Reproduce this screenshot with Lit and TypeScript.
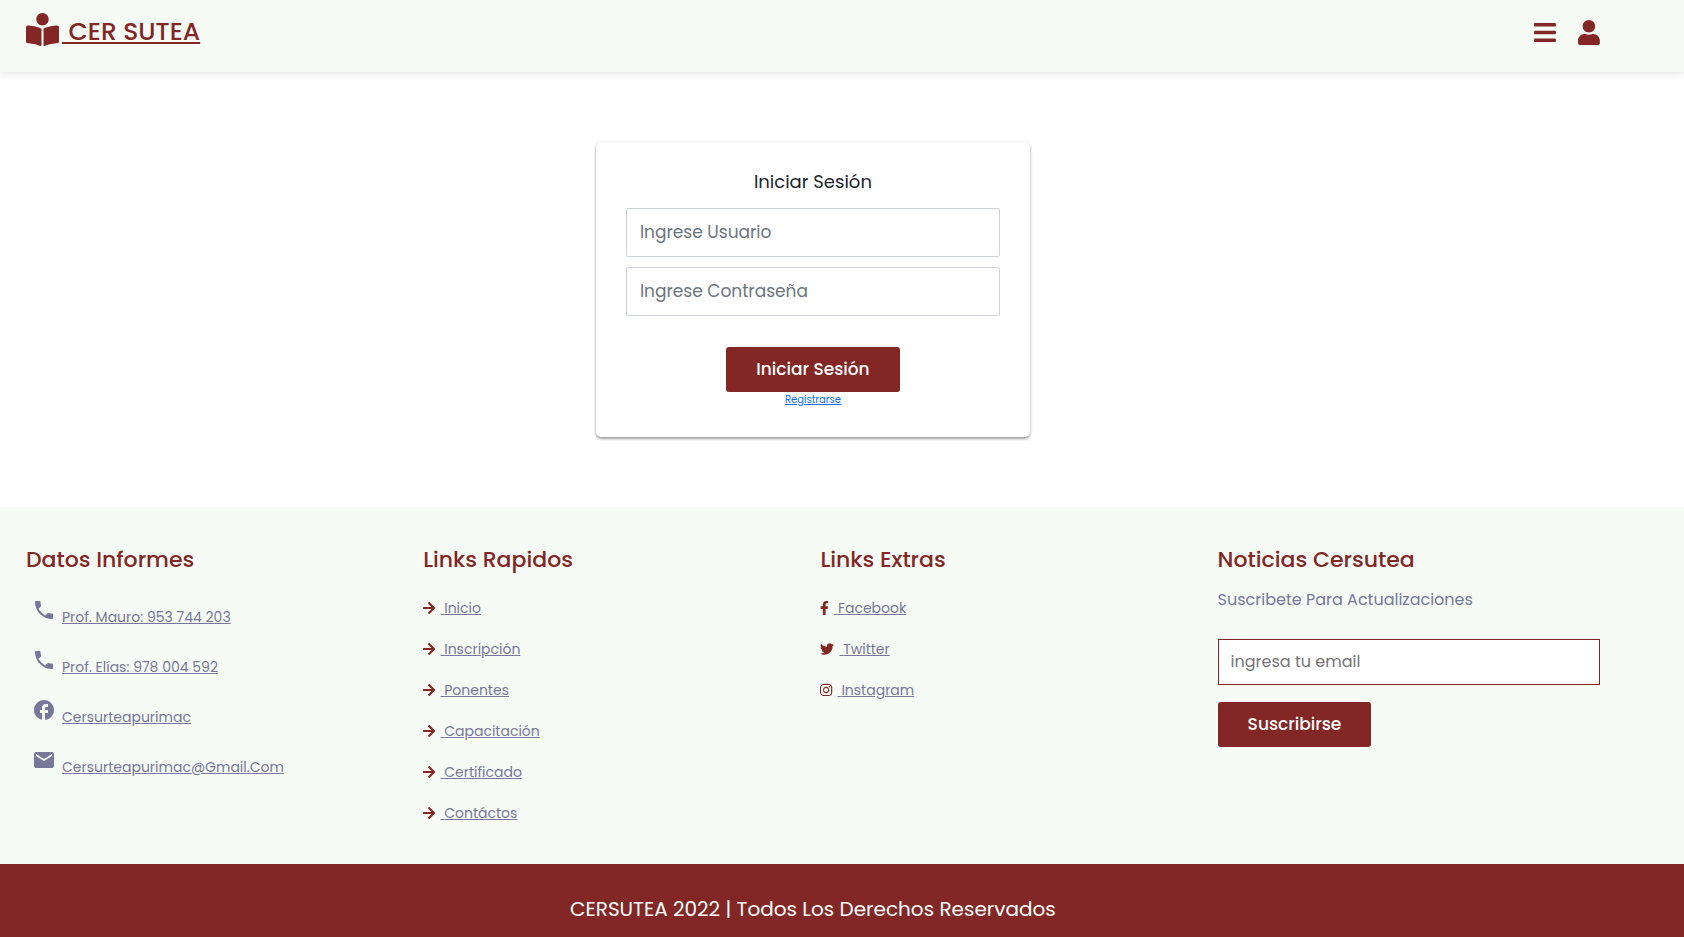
import { LitElement, html, css, svg } from "lit";
import { customElement, property } from "lit/decorators.js";

type Glyph = { box: string; d: string };

const GLYPHS: Record<string, Glyph> = {
  reader: {
    box: "0 0 512 512",
    d: "M352 96c0-53.02-42.98-96-96-96s-96 42.98-96 96 42.98 96 96 96 96-42.98 96-96zM233.59 241.1c-59.33-36.32-155.43-46.3-203.79-49.05C13.55 191.13 0 203.51 0 219.14v222.8c0 14.33 11.59 26.28 26.49 27.05 43.66 2.29 131.99 10.68 193.04 41.43 9.37 4.72 20.48-1.71 20.48-11.87V252.56c-.01-4.67-2.32-8.95-6.42-11.46zm248.61-49.05c-48.35 2.74-144.46 12.73-203.78 49.05-4.1 2.51-6.41 6.96-6.41 11.63v245.79c0 10.19 11.14 16.63 20.54 11.9 61.04-30.72 149.32-39.11 192.97-41.4 14.9-.78 26.49-12.73 26.49-27.06V219.14c-.01-15.63-13.56-28.01-29.8-27.09z",
  },
  bars: {
    box: "0 0 448 512",
    d: "M16 132h416c8.837 0 16-7.163 16-16V76c0-8.837-7.163-16-16-16H16C7.163 60 0 67.163 0 76v40c0 8.837 7.163 16 16 16zm0 160h416c8.837 0 16-7.163 16-16v-40c0-8.837-7.163-16-16-16H16c-8.837 0-16 7.163-16 16v40c0 8.837 7.163 16 16 16zm0 160h416c8.837 0 16-7.163 16-16v-40c0-8.837-7.163-16-16-16H16c-8.837 0-16 7.163-16 16v40c0 8.837 7.163 16 16 16z",
  },
  user: {
    box: "0 0 448 512",
    d: "M224 256c70.7 0 128-57.3 128-128S294.7 0 224 0 96 57.3 96 128s57.3 128 128 128zm89.6 32h-16.7c-22.2 10.2-46.9 16-72.9 16s-50.6-5.8-72.9-16h-16.7C60.2 288 0 348.2 0 422.4V464c0 26.5 21.5 48 48 48h352c26.5 0 48-21.5 48-48v-41.6c0-74.2-60.2-134.4-134.4-134.4z",
  },
  arrow: {
    box: "0 0 448 512",
    d: "M190.5 66.9l22.2-22.2c9.4-9.4 24.6-9.4 33.9 0L441 239c9.4 9.4 9.4 24.6 0 33.9L246.6 467.3c-9.4 9.4-24.6 9.4-33.9 0l-22.2-22.2c-9.5-9.5-9.3-25 .4-34.3L311.4 296H24c-13.3 0-24-10.7-24-24v-32c0-13.3 10.7-24 24-24h287.4L190.9 101.2c-9.8-9.3-10-24.8-.4-34.3z",
  },
  facebookF: {
    box: "0 0 320 512",
    d: "M279.14 288l14.22-92.66h-88.91v-60.13c0-25.35 12.42-50.06 52.24-50.06h40.42V6.26S260.43 0 225.36 0c-73.22 0-121.08 44.38-121.08 124.72v70.62H22.89V288h81.39v224h100.17V288z",
  },
  twitter: {
    box: "0 0 512 512",
    d: "M459.37 151.716c.325 4.548.325 9.097.325 13.645 0 138.72-105.583 298.558-298.558 298.558-59.452 0-114.68-17.219-161.137-47.106 8.447.974 16.568 1.299 25.34 1.299 49.055 0 94.213-16.568 130.274-44.832-46.132-.975-84.792-31.188-98.112-72.772 6.498.974 12.995 1.624 19.818 1.624 9.421 0 18.843-1.3 27.614-3.573-48.081-9.747-84.143-51.98-84.143-102.985v-1.299c13.969 7.797 30.214 12.67 47.431 13.319-28.264-18.843-46.781-51.005-46.781-87.391 0-19.492 5.197-37.36 14.294-52.954 51.655 63.675 129.3 105.258 216.365 109.807-1.624-7.797-2.599-15.918-2.599-24.04 0-57.828 46.782-104.934 104.934-104.934 30.213 0 57.502 12.67 76.67 33.137 23.715-4.548 46.456-13.32 66.599-25.34-7.798 24.366-24.366 44.833-46.132 57.827 21.117-2.273 41.584-8.122 60.426-16.243-14.292 20.791-32.161 39.308-52.628 54.253z",
  },
  instagram: {
    box: "0 0 448 512",
    d: "M224.1 141c-63.6 0-114.9 51.3-114.9 114.9s51.3 114.9 114.9 114.9S339 319.5 339 255.9 287.7 141 224.1 141zm0 189.6c-41.1 0-74.7-33.5-74.7-74.7s33.5-74.7 74.7-74.7 74.7 33.5 74.7 74.7-33.6 74.7-74.7 74.7zm146.4-194.3c0 14.9-12 26.8-26.8 26.8-14.9 0-26.8-12-26.8-26.8s12-26.8 26.8-26.8 26.8 12 26.8 26.8zm76.1 27.2c-1.7-35.9-9.9-67.7-36.2-93.9-26.2-26.2-58-34.4-93.9-36.2-37-2.1-147.9-2.1-184.9 0-35.8 1.7-67.6 9.9-93.9 36.1s-34.4 58-36.2 93.9c-2.1 37-2.1 147.9 0 184.9 1.7 35.9 9.9 67.7 36.2 93.9s58 34.4 93.9 36.2c37 2.1 147.9 2.1 184.9 0 35.9-1.7 67.7-9.9 93.9-36.2 26.2-26.2 34.4-58 36.2-93.9 2.1-37 2.1-147.8 0-184.8zM398.8 388c-7.8 19.6-22.9 34.7-42.6 42.6-29.5 11.7-99.5 9-132.1 9s-102.7 2.6-132.1-9c-19.6-7.8-34.7-22.9-42.6-42.6-11.7-29.5-9-99.5-9-132.1s-2.6-102.7 9-132.1c7.8-19.6 22.9-34.7 42.6-42.6 29.5-11.7 99.5-9 132.1-9s102.7-2.6 132.1 9c19.6 7.8 34.7 22.9 42.6 42.6 11.7 29.5 9 99.5 9 132.1s2.7 102.7-9 132.1z",
  },
  phone: {
    box: "0 0 24 24",
    d: "M6.62 10.79c1.44 2.83 3.76 5.14 6.59 6.59l2.2-2.2c.27-.27.67-.36 1.02-.24 1.12.37 2.33.57 3.57.57.55 0 1 .45 1 1V20c0 .55-.45 1-1 1-9.39 0-17-7.61-17-17 0-.55.45-1 1-1h3.5c.55 0 1 .45 1 1 0 1.25.2 2.45.57 3.57.11.35.03.74-.25 1.02l-2.2 2.2z",
  },
  facebook: {
    box: "0 0 24 24",
    d: "M22 12c0-5.52-4.48-10-10-10S2 6.48 2 12c0 4.84 3.44 8.87 8 9.8V15H8v-3h2V9.5C10 7.57 11.57 6 13.5 6H16v3h-2c-.55 0-1 .45-1 1v2h3v3h-3v6.95c5.05-.5 9-4.76 9-9.95z",
  },
  mail: {
    box: "0 0 24 24",
    d: "M20 4H4c-1.1 0-1.99.9-1.99 2L2 18c0 1.1.9 2 2 2h16c1.1 0 2-.9 2-2V6c0-1.1-.9-2-2-2zm0 4l-8 5-8-5V6l8 5 8-5v2z",
  },
};

@customElement("cer-icon")
class CerIcon extends LitElement {
  @property() name = "arrow";

  static styles = css`
    :host {
      display: inline-flex;
      flex: none;
    }
    .glyph {
      height: 100%;
      width: auto;
      fill: currentColor;
    }
  `;

  render() {
    const g = GLYPHS[this.name];
    return html`<svg class="glyph" viewBox=${g.box} aria-hidden="true">${svg`<path d=${g.d}></path>`}</svg>`;
  }
}

const CONTACTS = [
  { icon: "phone", text: "Prof. Mauro: 953 744 203" },
  { icon: "phone", text: "Prof. Elías: 978 004 592" },
  { icon: "facebook", text: "Cersurteapurimac" },
  { icon: "mail", text: "Cersurteapurimac@Gmail.Com" },
];
const QUICK = ["Inicio", "Inscripción", "Ponentes", "Capacitación", "Certificado", "Contáctos"].map(
  (text) => ({ icon: "arrow", text })
);
const SOCIAL = [
  { icon: "facebookF", text: "Facebook" },
  { icon: "twitter", text: "Twitter" },
  { icon: "instagram", text: "Instagram" },
];

@customElement("app-root")
class AppRoot extends LitElement {
  static styles = css`
    :host {
      --brand: #822725;
      --tint: #f6fbf6;
      --muted: #777799;
      display: flex;
      flex-direction: column;
      min-height: 100vh;
      background: #fff;
      font-family: Poppins, Inter, "Noto Sans", sans-serif;
      font-size: 16px;
      line-height: 24px;
      color: #212529;
    }
    *,
    *::before,
    *::after {
      box-sizing: border-box;
    }
    .header,
    .main,
    .footer,
    .credit {
      padding-left: 26px;
      padding-right: 5%;
    }
    .header {
      display: flex;
      justify-content: space-between;
      align-items: center;
      height: 72px;
      padding-bottom: 8px;
      background: var(--tint);
      box-shadow: 0 2px 8px rgba(0, 0, 0, 0.1);
    }
    .brand {
      display: flex;
      align-items: flex-start;
      gap: 3px;
      color: var(--brand);
      font-size: 25px;
      line-height: 38px;
      font-weight: 500;
      text-decoration: none;
    }
    .brand cer-icon {
      height: 33px;
    }
    .brand-name {
      white-space: pre;
      text-decoration: underline;
      text-decoration-thickness: 2px;
      text-underline-offset: 2px;
    }
    .tools {
      display: flex;
      gap: 22px;
    }
    .tool {
      display: flex;
      padding: 0;
      border: 0;
      background: none;
      color: var(--brand);
      cursor: pointer;
    }
    .tool cer-icon {
      height: 25px;
    }
    .main {
      display: flex;
      justify-content: center;
      padding-top: 70px;
      padding-bottom: 70px;
    }
    .card {
      display: flex;
      flex-direction: column;
      align-items: center;
      width: 434px;
      padding: 28px 30px 30px;
      border-radius: 5px;
      box-shadow: 0 2px 3px rgba(0, 0, 0, 0.36), 0 0 3px rgba(0, 0, 0, 0.1);
    }
    .card-title {
      margin: 0 0 14px;
      font-size: 18px;
      line-height: 24px;
      font-weight: 400;
    }
    .field {
      width: 100%;
      height: 49px;
      margin-bottom: 10px;
      padding: 0 13px 1px;
      border: 1px solid #ced4da;
      border-radius: 2px;
      background: #fff;
      font: inherit;
      font-size: 17px;
      color: inherit;
    }
    .field::placeholder {
      color: #6c757d;
      opacity: 1;
    }
    .button {
      height: 45px;
      padding: 0 30px 1px;
      border: 0;
      border-radius: 3px;
      background: var(--brand);
      color: #fff;
      font: inherit;
      font-size: 17px;
      font-weight: 500;
      cursor: pointer;
    }
    .card .button {
      margin-top: 21px;
    }
    .register {
      color: #0d6efd;
      font-size: 10px;
      line-height: 15px;
    }
    .footer {
      display: grid;
      grid-template-columns: repeat(4, 1fr);
      gap: 15px;
      padding-top: 37px;
      padding-bottom: 31px;
      background: var(--tint);
    }
    .heading {
      margin: 0;
      color: var(--brand);
      font-size: 22px;
      line-height: 31px;
      font-weight: 500;
    }
    .list {
      margin: 0;
      padding: 0;
      list-style: none;
    }
    .contacts {
      padding: 23px 0 0 6px;
    }
    .links {
      padding: 12px 0 0;
    }
    .contact {
      display: flex;
      align-items: flex-start;
      gap: 6px;
      height: 50px;
      color: var(--muted);
      font-size: 14px;
      line-height: 22px;
      text-decoration: none;
    }
    .contact cer-icon {
      height: 24px;
    }
    .contact-text {
      padding-top: 8px;
      text-decoration: underline;
    }
    .link {
      display: flex;
      align-items: center;
      gap: 5px;
      height: 41px;
      color: var(--muted);
      font-size: 14px;
      line-height: 22px;
      text-decoration: none;
    }
    .link cer-icon {
      height: 14px;
      color: var(--brand);
    }
    .link-text {
      white-space: pre;
      text-decoration: underline;
    }
    .note {
      margin: 13px 0 27px;
      color: var(--muted);
      font-size: 16px;
      line-height: 24px;
    }
    .email {
      display: block;
      width: 100%;
      height: 46px;
      margin-bottom: 17px;
      padding: 0 12px 1px;
      border: 1px solid var(--brand);
      background: #fff;
      font: inherit;
      color: inherit;
    }
    .email::placeholder {
      color: #757575;
      opacity: 1;
    }
    .credit {
      flex: 1;
      padding-top: 30px;
      padding-bottom: 13px;
      background: var(--brand);
      color: #fff;
      font-size: 20px;
      line-height: 30px;
      text-align: center;
    }
  `;

  private links(items: { icon: string; text: string }[]) {
    return html`<ul class="list links">
      ${items.map(
        (i) => html`<li>
          <a class="link" href="#"><cer-icon name=${i.icon}></cer-icon><span class="link-text"> ${i.text}</span></a>
        </li>`
      )}
    </ul>`;
  }

  render() {
    return html`
      <header class="header">
        <a class="brand" href="#"><cer-icon name="reader"></cer-icon><span class="brand-name"> CER SUTEA</span></a>
        <div class="tools">
          <button class="tool" type="button" aria-label="Menú"><cer-icon name="bars"></cer-icon></button>
          <button class="tool" type="button" aria-label="Usuario"><cer-icon name="user"></cer-icon></button>
        </div>
      </header>
      <main class="main">
        <form class="card" @submit=${(e: Event) => e.preventDefault()}>
          <h3 class="card-title">Iniciar Sesión</h3>
          <input class="field" type="text" placeholder="Ingrese Usuario" aria-label="Usuario" />
          <input class="field" type="password" placeholder="Ingrese Contraseña" aria-label="Contraseña" />
          <button class="button" type="submit">Iniciar Sesión</button>
          <a class="register" href="#">Registrarse</a>
        </form>
      </main>
      <footer class="footer">
        <section>
          <h3 class="heading">Datos Informes</h3>
          <ul class="list contacts">
            ${CONTACTS.map(
              (c) => html`<li>
                <a class="contact" href="#"><cer-icon name=${c.icon}></cer-icon><span class="contact-text">${c.text}</span></a>
              </li>`
            )}
          </ul>
        </section>
        <section>
          <h3 class="heading">Links Rapidos</h3>
          ${this.links(QUICK)}
        </section>
        <section>
          <h3 class="heading">Links Extras</h3>
          ${this.links(SOCIAL)}
        </section>
        <section>
          <h3 class="heading">Noticias Cersutea</h3>
          <p class="note">Suscribete Para Actualizaciones</p>
          <input class="email" type="email" placeholder="ingresa tu email" aria-label="Email" />
          <button class="button" type="button">Suscribirse</button>
        </section>
      </footer>
      <div class="credit">CERSUTEA 2022 | Todos Los Derechos Reservados</div>
    `;
  }
}
